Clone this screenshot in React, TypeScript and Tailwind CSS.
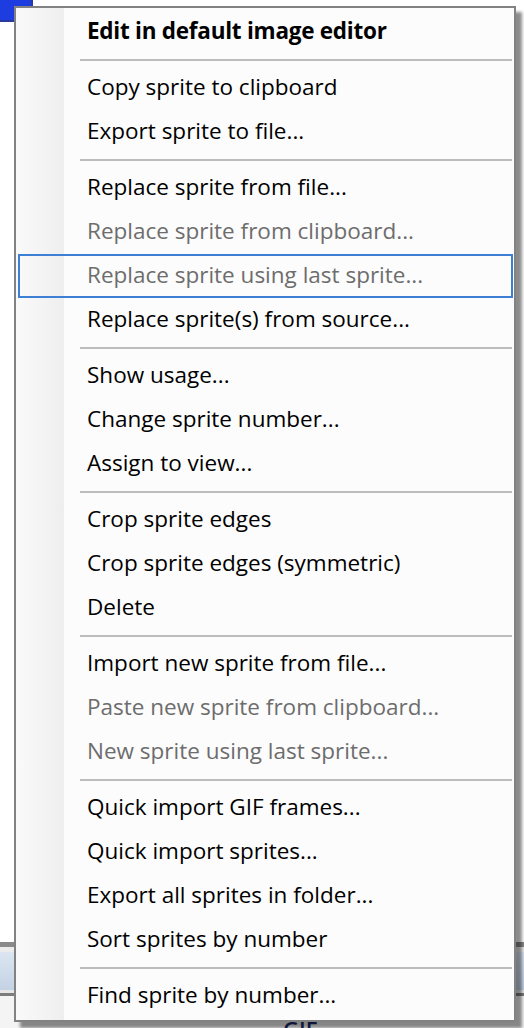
type Item = { label: string; disabled?: boolean; bold?: boolean; hover?: boolean } | "sep";

const items: Item[] = [
  { label: "Edit in default image editor", bold: true },
  "sep",
  { label: "Copy sprite to clipboard" },
  { label: "Export sprite to file..." },
  "sep",
  { label: "Replace sprite from file..." },
  { label: "Replace sprite from clipboard...", disabled: true },
  { label: "Replace sprite using last sprite...", disabled: true, hover: true },
  { label: "Replace sprite(s) from source..." },
  "sep",
  { label: "Show usage..." },
  { label: "Change sprite number..." },
  { label: "Assign to view..." },
  "sep",
  { label: "Crop sprite edges" },
  { label: "Crop sprite edges (symmetric)" },
  { label: "Delete" },
  "sep",
  { label: "Import new sprite from file..." },
  { label: "Paste new sprite from clipboard...", disabled: true },
  { label: "New sprite using last sprite...", disabled: true },
  "sep",
  { label: "Quick import GIF frames..." },
  { label: "Quick import sprites..." },
  { label: "Export all sprites in folder..." },
  { label: "Sort sprites by number" },
  "sep",
  { label: "Find sprite by number..." },
];

export default function App() {
  return (
    <div className="relative h-[1028px] w-[524px] overflow-hidden bg-white font-['Open_Sans',sans-serif]">
      {/* window behind the menu */}
      <div className="flex h-full flex-col">
        <div className="flex">
          <div className="h-[22px] w-[33px] border-r-2 border-b-2 border-[#2a3a9a] bg-[#1d3de0]" />
        </div>
        <div className="flex-1" />
        <div className="h-[5px] bg-[#8a8a8a]" />
        <div className="h-[5px] bg-[#ececec]" />
        <div className="h-[38px] bg-gradient-to-b from-[#dce6f2] to-[#c3d2e4]" />
        <div className="h-[3px] bg-[#e6e6e6]" />
        <div className="h-[3px] bg-[#7c7c7c]" />
        <div className="flex h-[32px] bg-[#f4f4f4] pl-[283px]">
          <span className="mt-[22px] text-[22px] font-semibold leading-none text-[#1a2a6a]">GIF</span>
        </div>
      </div>

      {/* context menu */}
      <div className="absolute left-[14px] top-[6px] w-[502px] border-[2px] border-[#828282] bg-[#fcfcfc] shadow-[6px_6px_3px_rgba(0,0,0,0.45)]">
        <div className="flex">
          <div className="w-[48px] shrink-0 bg-gradient-to-r from-[#fafafa] to-[#eeeeee]" />
          <div className="flex flex-1 flex-col py-[2px]">
            {items.map((it, i) =>
              it === "sep" ? (
                <div key={i} className="flex h-[12px] items-center pl-[16px] pr-[2px]">
                  <div className="h-[2px] w-full bg-[#bcbcbc]" />
                </div>
              ) : (
                <div key={i} className="relative flex h-[44px] items-center pb-[2px] pl-[23px]">
                  {it.hover && (
                    <div className="absolute top-0 bottom-0 left-[-46px] right-[1px] border-[2px] border-[#3d7fd5]" />
                  )}
                  <span
                    className={`text-[22.5px] leading-none whitespace-nowrap ${
                      it.bold ? "font-bold tracking-[-0.25px]" : ""
                    } ${it.disabled ? "text-[#6d6d6d]" : "text-black"}`}
                  >
                    {it.label}
                  </span>
                </div>
              )
            )}
          </div>
        </div>
      </div>
    </div>
  );
}
